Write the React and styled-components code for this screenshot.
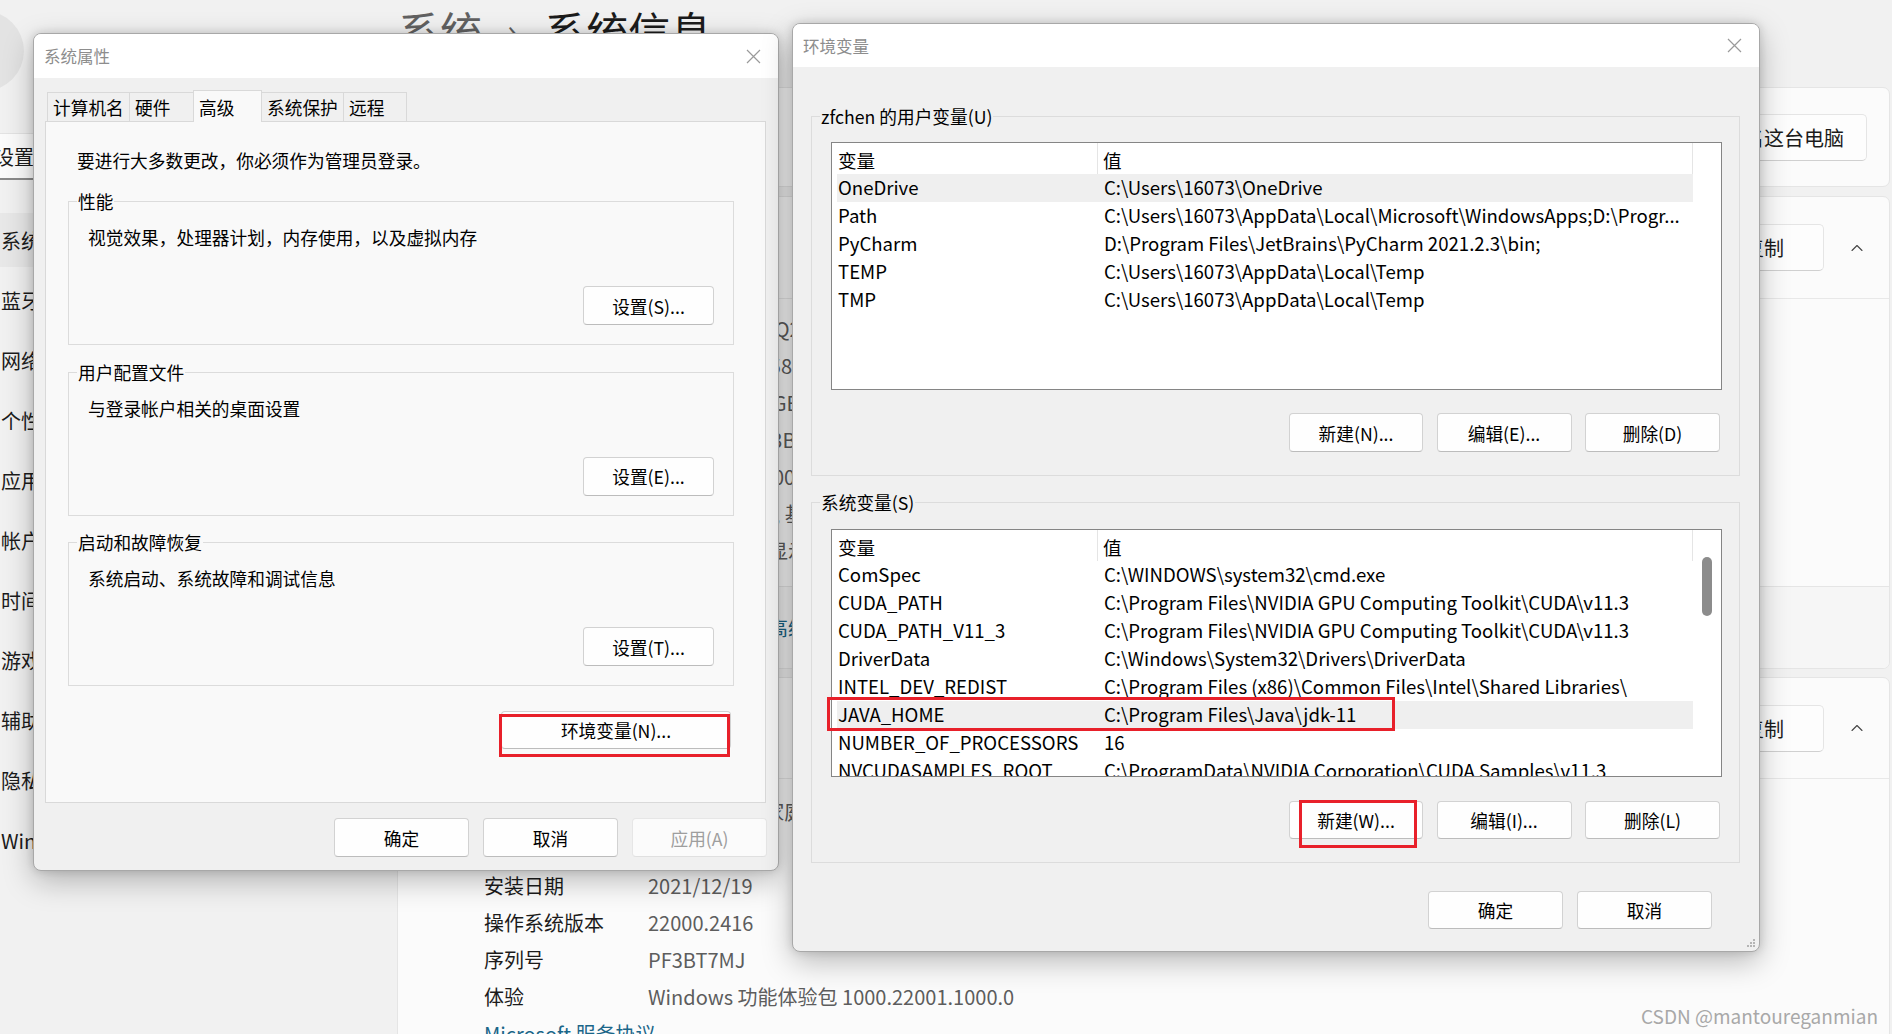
import React from 'react'
import styled, { createGlobalStyle } from 'styled-components'
import { ChevronUp } from 'lucide-react'

const FONT = `"Noto Sans CJK SC", "Noto Sans", sans-serif`

const GlobalStyle = createGlobalStyle`
  html, body { margin: 0; padding: 0; }
  body {
    width: 1892px;
    height: 1034px;
    overflow: hidden;
    background: #f1f1f1;
    font-family: ${FONT};
    color: #1b1b1b;
  }
  #root { position: relative; width: 1892px; height: 1034px; overflow: hidden; }
`

/* ---------- settings window in the background ---------- */

const SettingsPage = styled.div`
  display: grid;
  grid-template-columns: 397px 1fr;
  height: 1034px;
  background: #f1f1f1;
`

const Sidebar = styled.aside`
  display: flex;
  flex-direction: column;
  font-size: 20px;
  overflow: hidden;
`

const Profile = styled.div`
  height: 133px;
  display: flex;
  align-items: flex-start;
  gap: 26px;
`

const Avatar = styled.div`
  width: 80px;
  height: 80px;
  flex-shrink: 0;
  border-radius: 50%;
  background: #e3e3e3;
  margin: 11px 0 0 -56px;
`

const UserName = styled.div`
  margin-top: 27px;
  font-size: 22px;
`

const Search = styled.div`
  box-sizing: border-box;
  height: 47px;
  width: 380px;
  margin-left: -20px;
  padding-left: 13px;
  display: flex;
  align-items: center;
  background: #fbfbfb;
  border: 1px solid #e3e3e3;
  border-bottom: 2px solid #8a8a8a;
  border-radius: 5px;
`

const Nav = styled.nav`
  margin-top: 30px;
  display: flex;
  flex-direction: column;
`

const NavItem = styled.div`
  height: 54px;
  width: 400px;
  margin: 3px 0 3px -20px;
  padding-left: 21px;
  display: flex;
  align-items: center;
  border-radius: 5px;
  white-space: nowrap;
  background: ${(p) => (p.$active ? '#e8e8e8' : 'transparent')};
`

const Content = styled.main`
  padding: 9px 2px 0 0;
  display: flex;
  flex-direction: column;
  min-width: 0;
`

const PageTitle = styled.h1`
  margin: 0 0 0 1px;
  font-size: 42px;
  line-height: 42px;
  font-weight: 400;
  display: flex;
  align-items: center;
  white-space: nowrap;
`

const Crumb = styled.span`
  color: ${(p) => (p.$current ? '#1b1b1b' : '#616161')};
`

const CrumbSep = styled.span`
  margin: 0 27px 0 25px;
  color: #616161;
  font-size: 34px;
`

const Card = styled.section`
  margin-top: ${(p) => p.$gap}px;
  background: #fbfbfb;
  border: 1px solid #e5e5e5;
  border-radius: 7px;
  overflow: hidden;
  flex-shrink: 0;
`

const CardHeader = styled.div`
  height: ${(p) => p.$h}px;
  display: flex;
  align-items: center;
  gap: 23px;
  padding: 0 22px 0 20px;
  font-size: 20px;
`

const CardTitle = styled.div`
  flex: 1;
  white-space: nowrap;
`

const FluentButton = styled.div`
  box-sizing: border-box;
  height: 47px;
  min-width: 120px;
  padding: 0 22px;
  display: flex;
  align-items: center;
  justify-content: center;
  background: #fdfdfd;
  border: 1px solid #e5e5e5;
  border-bottom-color: #d0d0d0;
  border-radius: 5px;
  font-size: 20px;
  white-space: nowrap;
`

const Chevron = styled.div`
  width: 20px;
  display: flex;
  color: #444;
`

const SpecList = styled.div`
  border-top: 1px solid #e8e8e8;
  padding: ${(p) => p.$pt}px 0 ${(p) => p.$pb}px 86px;
`

const SpecRow = styled.div`
  display: grid;
  grid-template-columns: 164px 1fr;
  height: 37px;
  align-items: center;
  font-size: 20px;
  white-space: nowrap;
`

const SpecValue = styled.span`
  color: #5d5d5d;
`

const Related = styled.div`
  height: 81px;
  border-top: 1px solid #e5e5e5;
  background: #f6f6f6;
  display: flex;
  align-items: center;
  gap: 30px;
  padding-left: 20px;
  font-size: 20px;
  white-space: nowrap;
`

const Link = styled.span`
  color: #1a6689;
`

/* ---------- classic dialogs ---------- */

const Dialog = styled.div`
  position: absolute;
  left: ${(p) => p.$x}px;
  top: ${(p) => p.$y}px;
  width: ${(p) => p.$w}px;
  height: ${(p) => p.$h}px;
  box-sizing: border-box;
  display: flex;
  flex-direction: column;
  overflow: hidden;
  background: #f0f0f0;
  border: 1px solid #a8a8a8;
  border-radius: 8px;
  box-shadow: 0 10px 30px rgba(0, 0, 0, 0.26), 0 0 10px rgba(0, 0, 0, 0.14);
  font-size: 17.7px;
  color: #000;
`

const TitleBar = styled.div`
  flex-shrink: 0;
  height: ${(p) => p.$h}px;
  display: flex;
  align-items: center;
  justify-content: space-between;
  padding: 0 17px 0 10px;
  background: #fff;
  color: #8d8d8d;
  font-size: 16.5px;
`

const DialogBody = styled.div`
  flex: 1;
  min-height: 0;
  display: flex;
  flex-direction: column;
  padding: ${(p) => p.$pad};
`

const TabRow = styled.div`
  position: relative;
  z-index: 1;
  height: 32px;
  margin-bottom: -1px;
  padding-left: 2px;
  display: flex;
  align-items: flex-end;
`

const Tab = styled.div`
  box-sizing: border-box;
  width: ${(p) => p.$w}px;
  height: ${(p) => (p.$active ? 32 : 30)}px;
  margin-right: -1px;
  padding-left: 5px;
  display: flex;
  align-items: center;
  background: ${(p) => (p.$active ? '#f9f9f9' : '#f0f0f0')};
  border: 1px solid #d9d9d9;
  border-bottom: ${(p) => (p.$active ? 'none' : '1px solid #d9d9d9')};
  white-space: nowrap;
`

const TabPanel = styled.div`
  flex: 1;
  display: flex;
  flex-direction: column;
  padding: 26px 31px 0 22px;
  background: #f9f9f9;
  border: 1px solid #d9d9d9;
`

const Notice = styled.div`
  margin-left: 9px;
  line-height: 25px;
`

const Group = styled.fieldset`
  margin: ${(p) => p.$mt}px 0 0;
  padding: 0 ${(p) => p.$pr}px ${(p) => p.$pb}px 19px;
  min-width: 0;
  display: flex;
  flex-direction: column;
  border: 1px solid #dcdcdc;
`

const Legend = styled.legend`
  margin-left: -11px;
  padding: 0 1px;
  line-height: 25px;
  white-space: nowrap;
`

const GroupText = styled.div`
  margin-top: 11px;
  line-height: 25px;
`

const WinButton = styled.div`
  position: relative;
  box-sizing: border-box;
  flex-shrink: 0;
  width: ${(p) => p.$w}px;
  height: ${(p) => p.$h || 39}px;
  margin-top: ${(p) => p.$mt || 0}px;
  margin-right: ${(p) => p.$mr || 0}px;
  align-self: ${(p) => (p.$end ? 'flex-end' : 'auto')};
  display: flex;
  align-items: center;
  justify-content: center;
  background: ${(p) => (p.$disabled ? '#fbfbfb' : '#fefefe')};
  color: ${(p) => (p.$disabled ? '#9e9e9e' : '#000')};
  border: 1px solid ${(p) => (p.$disabled ? '#e6e6e6' : '#d2d2d2')};
  border-bottom-color: ${(p) => (p.$disabled ? '#e0e0e0' : '#bcbcbc')};
  border-radius: 4px;
  white-space: nowrap;
`

const ButtonRow = styled.div`
  display: flex;
  justify-content: flex-end;
  margin-top: ${(p) => p.$mt}px;
  margin-right: ${(p) => p.$mr}px;
  gap: ${(p) => p.$gap}px;
`

const ListView = styled.div`
  position: relative;
  box-sizing: border-box;
  height: 248px;
  margin-top: ${(p) => p.$mt}px;
  display: flex;
  background: #fff;
  border: 1px solid #858585;
  font-size: 18.6px;
`

const ListColumns = styled.div`
  flex: 1;
  min-width: 0;
  overflow: hidden;
  display: flex;
  flex-direction: column;
`

const ListHead = styled.div`
  flex-shrink: 0;
  height: 31px;
  display: grid;
  grid-template-columns: 266px 1fr;
`

const HeadCell = styled.div`
  display: flex;
  align-items: center;
  padding-left: ${(p) => p.$pl}px;
  padding-top: 2px;
  border-right: 1px solid #e5e5e5;
`

const ListRow = styled.div`
  flex-shrink: 0;
  box-sizing: border-box;
  height: 28px;
  padding-bottom: 3px;
  margin-left: 5px;
  display: grid;
  grid-template-columns: 261px 1fr;
  align-items: center;
  white-space: nowrap;
  background: ${(p) => (p.$selected ? '#efefef' : 'transparent')};
`

const Cell = styled.span`
  padding-left: ${(p) => p.$pl}px;
  overflow: hidden;
`

const ScrollTrack = styled.div`
  width: 28px;
  flex-shrink: 0;
`

const ScrollThumb = styled.div`
  width: 10px;
  height: 59px;
  margin: 27px 0 0 9px;
  border-radius: 5px;
  background: #8c8c8c;
`

const Highlight = styled.div`
  position: absolute;
  left: ${(p) => p.$l}px;
  top: ${(p) => p.$t}px;
  width: ${(p) => p.$w}px;
  height: ${(p) => p.$h}px;
  box-sizing: border-box;
  border: 3px solid #e8202a;
  pointer-events: none;
`

const Grip = styled.svg`
  position: absolute;
  right: 3px;
  bottom: 3px;
`

const Watermark = styled.div`
  position: absolute;
  right: 14px;
  bottom: 5px;
  font-size: 19px;
  color: #a8a8a8;
  white-space: nowrap;
`

function CloseIcon() {
  return (
    <svg width="15" height="15" viewBox="0 0 15 15">
      <path d="M1 1L14 14M14 1L1 14" stroke="#9a9a9a" strokeWidth="1.2" fill="none" />
    </svg>
  )
}

const navItems = [
  '系统', '蓝牙和其他设备', '网络和 Internet', '个性化', '应用', '帐户',
  '时间和语言', '游戏', '辅助功能', '隐私和安全性', 'Windows 更新',
]

const deviceSpecs = [
  ['设备名称', 'LAPTOP-8UJVQ2K'],
  ['处理器', 'AMD Ryzen 7 5800H with Radeon Graphics 3.20 GHz'],
  ['机带 RAM', '16.0 GB (15.4 GB 可用)'],
  ['设备 ID', '6A2F84DC-1E3B-4C2A-9E51-7B0D2C3E'],
  ['产品 ID', '00342-30602-00000-AAOEM'],
  ['系统类型', '64 位操作系统, 基于 x64 的处理器'],
  ['笔和触控', '没有可用于此显示器的笔或触控输入'],
]

const winSpecs = [
  ['版本', 'Windows 11 家庭中文版'],
  ['版本', '21H2'],
  ['安装日期', '2021/12/19'],
  ['操作系统版本', '22000.2416'],
  ['序列号', 'PF3BT7MJ'],
  ['体验', 'Windows 功能体验包 1000.22001.1000.0'],
]

const userVars = [
  ['OneDrive', 'C:\\Users\\16073\\OneDrive'],
  ['Path', 'C:\\Users\\16073\\AppData\\Local\\Microsoft\\WindowsApps;D:\\Progr...'],
  ['PyCharm', 'D:\\Program Files\\JetBrains\\PyCharm 2021.2.3\\bin;'],
  ['TEMP', 'C:\\Users\\16073\\AppData\\Local\\Temp'],
  ['TMP', 'C:\\Users\\16073\\AppData\\Local\\Temp'],
]

const systemVars = [
  ['ComSpec', 'C:\\WINDOWS\\system32\\cmd.exe'],
  ['CUDA_PATH', 'C:\\Program Files\\NVIDIA GPU Computing Toolkit\\CUDA\\v11.3'],
  ['CUDA_PATH_V11_3', 'C:\\Program Files\\NVIDIA GPU Computing Toolkit\\CUDA\\v11.3'],
  ['DriverData', 'C:\\Windows\\System32\\Drivers\\DriverData'],
  ['INTEL_DEV_REDIST', 'C:\\Program Files (x86)\\Common Files\\Intel\\Shared Libraries\\'],
  ['JAVA_HOME', 'C:\\Program Files\\Java\\jdk-11'],
  ['NUMBER_OF_PROCESSORS', '16'],
  ['NVCUDASAMPLES_ROOT', 'C:\\ProgramData\\NVIDIA Corporation\\CUDA Samples\\v11.3'],
  ['NVTOOLSEXT_PATH', 'C:\\Program Files\\NVIDIA Corporation\\NvToolsExt\\'],
]

function VarList({ rows, selected, scroll, mt, children }) {
  return (
    <ListView $mt={mt}>
      <ListColumns>
        <ListHead>
          <HeadCell $pl={6}>变量</HeadCell>
          <HeadCell $pl={5}>值</HeadCell>
        </ListHead>
        {rows.map(([name, value]) => (
          <ListRow key={name} $selected={name === selected}>
            <Cell $pl={1}>{name}</Cell>
            <Cell $pl={6}>{value}</Cell>
          </ListRow>
        ))}
      </ListColumns>
      <ScrollTrack>{scroll && <ScrollThumb />}</ScrollTrack>
      {children}
    </ListView>
  )
}

function SettingsBackground() {
  return (
    <SettingsPage>
      <Sidebar>
        <Profile>
          <Avatar />
          <UserName>张峰辰</UserName>
        </Profile>
        <Search>设置</Search>
        <Nav>
          {navItems.map((item, i) => (
            <NavItem key={item} $active={i === 0}>{item}</NavItem>
          ))}
        </Nav>
      </Sidebar>
      <Content>
        <PageTitle>
          <Crumb>系统</Crumb>
          <CrumbSep>›</CrumbSep>
          <Crumb $current>系统信息</Crumb>
        </PageTitle>

        <Card $gap={36}>
          <CardHeader $h={98}>
            <CardTitle>LAPTOP-8UJVQ2K</CardTitle>
            <FluentButton>重命名这台电脑</FluentButton>
          </CardHeader>
        </Card>

        <Card $gap={9}>
          <CardHeader $h={101}>
            <CardTitle>设备规格</CardTitle>
            <FluentButton>复制</FluentButton>
            <Chevron><ChevronUp size={20} strokeWidth={1.3} /></Chevron>
          </CardHeader>
          <SpecList $pt={11} $pb={17}>
            {deviceSpecs.map(([k, v]) => (
              <SpecRow key={k}><span>{k}</span><SpecValue>{v}</SpecValue></SpecRow>
            ))}
          </SpecList>
          <Related>
            <span>相关链接</span>
            <Link>域或工作组</Link>
            <Link>系统保护</Link>
            <Link>高级系统设置</Link>
          </Related>
        </Card>

        <Card $gap={8}>
          <CardHeader $h={100}>
            <CardTitle>Windows 规格</CardTitle>
            <FluentButton>复制</FluentButton>
            <Chevron><ChevronUp size={20} strokeWidth={1.3} /></Chevron>
          </CardHeader>
          <SpecList $pt={14} $pb={0}>
            {winSpecs.map(([k, v], i) => (
              <SpecRow key={k + i}><span>{k}</span><SpecValue>{v}</SpecValue></SpecRow>
            ))}
            <SpecRow><Link>Microsoft 服务协议</Link></SpecRow>
          </SpecList>
        </Card>
      </Content>
    </SettingsPage>
  )
}

function SystemProperties() {
  const tabs = [['计算机名', 83], ['硬件', 65], ['高级', 69], ['系统保护', 83], ['远程', 64]]
  return (
    <Dialog $x={33} $y={33} $w={746} $h={838}>
      <TitleBar $h={44}>
        <span>系统属性</span>
        <CloseIcon />
      </TitleBar>
      <DialogBody $pad="12px 12px 13px 11px">
        <TabRow>
          {tabs.map(([t, w]) => (
            <Tab key={t} $w={w} $active={t === '高级'}>{t}</Tab>
          ))}
        </TabRow>
        <TabPanel>
          <Notice>要进行大多数更改，你必须作为管理员登录。</Notice>

          <Group $mt={16} $pr={19} $pb={19}>
            <Legend>性能</Legend>
            <GroupText>视觉效果，处理器计划，内存使用，以及虚拟内存</GroupText>
            <WinButton $w={131} $mt={36} $end>设置(S)...</WinButton>
          </Group>

          <Group $mt={14.5} $pr={19} $pb={19}>
            <Legend>用户配置文件</Legend>
            <GroupText>与登录帐户相关的桌面设置</GroupText>
            <WinButton $w={131} $mt={36} $end>设置(E)...</WinButton>
          </Group>

          <Group $mt={14.5} $pr={19} $pb={19}>
            <Legend>启动和故障恢复</Legend>
            <GroupText>系统启动、系统故障和调试信息</GroupText>
            <WinButton $w={131} $mt={36} $end>设置(T)...</WinButton>
          </Group>

          <WinButton $w={230} $h={38} $mt={25} $mr={3} $end>
            环境变量(N)...
            <Highlight $l={-3} $t={2} $w={231} $h={43} />
          </WinButton>
        </TabPanel>
        <ButtonRow $mt={15} $mr={-1} $gap={14}>
          <WinButton $w={135}>确定</WinButton>
          <WinButton $w={135}>取消</WinButton>
          <WinButton $w={135} $disabled>应用(A)</WinButton>
        </ButtonRow>
      </DialogBody>
    </Dialog>
  )
}

function EnvironmentVariables() {
  return (
    <Dialog $x={792} $y={23} $w={968} $h={929}>
      <TitleBar $h={43}>
        <span>环境变量</span>
        <CloseIcon />
      </TitleBar>
      <DialogBody $pad="36.5px 19px 22px 18px">
        <Group $mt={0} $pr={17} $pb={23}>
          <Legend>zfchen 的用户变量(U)</Legend>
          <VarList rows={userVars} selected="OneDrive" mt={13.5} />
          <ButtonRow $mt={23} $mr={2} $gap={13.5}>
            <WinButton $w={134}>新建(N)...</WinButton>
            <WinButton $w={135}>编辑(E)...</WinButton>
            <WinButton $w={135}>删除(D)</WinButton>
          </ButtonRow>
        </Group>

        <Group $mt={13.5} $pr={17} $pb={23}>
          <Legend>系统变量(S)</Legend>
          <VarList rows={systemVars} selected="JAVA_HOME" scroll mt={14.5}>
            <Highlight $l={-5} $t={167} $w={568} $h={34} />
          </VarList>
          <ButtonRow $mt={24} $mr={2} $gap={13.5}>
            <WinButton $w={134} $h={38}>
              新建(W)...
              <Highlight $l={9} $t={-2} $w={118} $h={48} />
            </WinButton>
            <WinButton $w={135} $h={38}>编辑(I)...</WinButton>
            <WinButton $w={135} $h={38}>删除(L)</WinButton>
          </ButtonRow>
        </Group>

        <ButtonRow $mt={28} $mr={28} $gap={14}>
          <WinButton $w={135} $h={38}>确定</WinButton>
          <WinButton $w={135} $h={38}>取消</WinButton>
        </ButtonRow>
      </DialogBody>
      <Grip width="12" height="12" viewBox="0 0 12 12">
        {[[9, 3], [9, 6], [6, 6], [9, 9], [6, 9], [3, 9]].map(([cx, cy]) => (
          <rect key={`${cx}-${cy}`} x={cx} y={cy} width="2" height="2" fill="#b5b5b5" />
        ))}
      </Grip>
    </Dialog>
  )
}

export default function App() {
  return (
    <>
      <GlobalStyle />
      <SettingsBackground />
      <SystemProperties />
      <EnvironmentVariables />
      <Watermark>CSDN @mantoureganmian</Watermark>
    </>
  )
}
